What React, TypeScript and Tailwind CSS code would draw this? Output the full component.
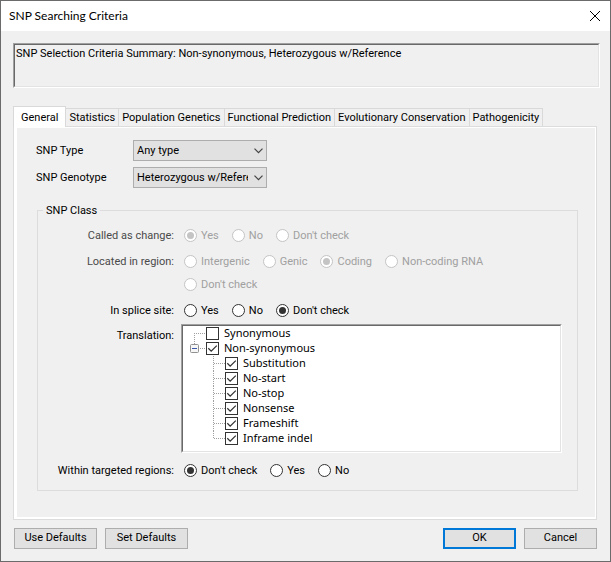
import React, { useState } from 'react';
import { clsx } from 'clsx';

const tabs = [
  'General',
  'Statistics',
  'Population Genetics',
  'Functional Prediction',
  'Evolutionary Conservation',
  'Pathogenicity',
];

const effects = ['Substitution', 'No-start', 'No-stop', 'Nonsense', 'Frameshift', 'Inframe indel'];

type RadioRowProps = {
  name: string;
  label: string;
  options: string[];
  selected: string;
  disabled?: boolean;
};

const RadioRow = ({ name, label, options, selected, disabled }: RadioRowProps) => (
  <div role="radiogroup" aria-labelledby={`${name}-label`} className="flex items-start">
    <span
      id={`${name}-label`}
      className={clsx('w-[136px] shrink-0 text-right', disabled ? 'text-[#4a4a4a]' : 'text-black')}
    >
      {label}
    </span>
    <div className="ml-2.5 flex max-w-[340px] flex-wrap gap-x-[13px] gap-y-2">
      {options.map((option) => (
        <label
          key={option}
          className={clsx('flex items-center gap-1', disabled ? 'text-[#a0a0a0]' : 'text-black')}
        >
          <input
            type="radio"
            name={name}
            defaultChecked={option === selected}
            disabled={disabled}
            className="grid size-[13px] appearance-none place-content-center rounded-full border border-[#333] bg-white before:size-[7px] before:rounded-full checked:before:bg-[#333] disabled:border-[#c4c4c4] disabled:checked:before:bg-[#c4c4c4]"
          />
          {option}
        </label>
      ))}
    </div>
  </div>
);

type SelectRowProps = {
  id: string;
  label: string;
  options: string[];
};

const SelectRow = ({ id, label, options }: SelectRowProps) => (
  <div className="flex items-center">
    <label htmlFor={id} className="w-[97px] shrink-0">
      {label}
    </label>
    <div className="grid w-[134px] items-center">
      <select
        id={id}
        className="col-start-1 row-start-1 h-[21px] w-full appearance-none border border-[#adadad] bg-[#e1e1e1] pr-[18px] pl-[3px]"
      >
        {options.map((option) => (
          <option key={option}>{option}</option>
        ))}
      </select>
      <svg
        viewBox="0 0 9 6"
        className="pointer-events-none col-start-1 row-start-1 mr-1 h-[6px] w-[9px] justify-self-end"
        fill="none"
        stroke="#444"
        strokeWidth="1.2"
      >
        <path d="M0.5 0.7 4.5 4.7 8.5 0.7" />
      </svg>
    </div>
  </div>
);

const TreeCheckbox = ({ label, defaultChecked }: { label: string; defaultChecked?: boolean }) => (
  <label className="flex items-center gap-[5px]">
    <span className="grid">
      <input
        type="checkbox"
        defaultChecked={defaultChecked}
        className="peer col-start-1 row-start-1 size-[13px] appearance-none border border-[#333] bg-white"
      />
      <svg
        viewBox="0 0 13 13"
        className="pointer-events-none invisible col-start-1 row-start-1 size-[13px] peer-checked:visible"
        fill="none"
        stroke="#333"
        strokeWidth="1.3"
      >
        <path d="M2.3 6.3 5.2 9.2 10.8 3.6" />
      </svg>
    </span>
    <span className="pb-0.5">{label}</span>
  </label>
);

const EffectTree = () => {
  const [open, setOpen] = useState(true);

  return (
    <ul
      aria-labelledby="translation-label"
      className="text-[11px] leading-[15px] text-black"
      style={{ fontFamily: '"Noto Sans", sans-serif' }}
    >
      <li className="flex h-[15px] items-center pl-[7px]">
        <svg width="16" height="15" fill="none" stroke="#a0a0a0" strokeDasharray="1 1">
          <path d="M4.5 7v8M4 7.5h12" />
        </svg>
        <TreeCheckbox label="Synonymous" />
      </li>
      <li>
        <div className="flex h-[15px] items-center pl-[7px]">
          <button type="button" aria-label="Toggle Non-synonymous" onClick={() => setOpen(!open)}>
            <svg width="16" height="15" fill="none" className="block">
              <path d="M4.5 0v3M10 7.5h6" stroke="#a0a0a0" strokeDasharray="1 1" />
              <rect x="0.5" y="3.5" width="8" height="8" rx="1" fill="#f6f6f6" stroke="#919191" />
              <path d={open ? 'M2 7.5h5' : 'M2 7.5h5M4.5 5v5'} stroke="#3a56a8" />
            </svg>
          </button>
          <TreeCheckbox label="Non-synonymous" defaultChecked />
        </div>
        {open && (
          <ul>
            {effects.map((effect, index) => (
              <li key={effect} className="flex h-[15px] items-center pl-[30px]">
                <svg width="12" height="15" fill="none" stroke="#a0a0a0" strokeDasharray="1 1">
                  <path d={index === effects.length - 1 ? 'M0.5 0v8M1 7.5h11' : 'M0.5 0v15M1 7.5h11'} />
                </svg>
                <TreeCheckbox label={effect} defaultChecked />
              </li>
            ))}
          </ul>
        )}
      </li>
    </ul>
  );
};

const DialogButton = ({ label, primary }: { label: string; primary?: boolean }) => (
  <button
    type="button"
    className={clsx(
      'h-[21px] bg-[#e1e1e1] pb-0.5 text-center',
      primary ? 'w-[73px] border-2 border-[#0078d7]' : 'border border-[#adadad]',
      label === 'Cancel' ? 'w-[73px]' : !primary && 'w-[83px]'
    )}
  >
    {label}
  </button>
);

export default function App() {
  const [active, setActive] = useState('General');

  return (
    <div
      className="flex min-h-screen flex-col border border-[#6b6b6b] bg-[#f0f0f0] text-[11px] leading-[15px] text-black"
      style={{ fontFamily: 'Roboto, "Liberation Sans", sans-serif' }}
    >
      <header
        className="flex h-[30px] items-center justify-between bg-white pr-2.5 pl-2 text-[12px]"
        style={{ fontFamily: 'Lato, "Open Sans", sans-serif' }}
      >
        <h1 className="pb-0.5">SNP Searching Criteria</h1>
        <button type="button" aria-label="Close">
          <svg width="10" height="10" fill="none" stroke="#000" className="block">
            <path d="M0 0 10 10M10 0 0 10" />
          </svg>
        </button>
      </header>

      <main className="flex flex-1 flex-col px-3 pt-3 pb-3">
        <div className="mr-[-2px] border border-t-[#a0a0a0] border-r-white border-b-white border-l-[#a0a0a0]">
          <p className="h-[43px] border border-t-[#696969] border-r-[#e3e3e3] border-b-[#e3e3e3] border-l-[#696969] pt-px pl-px">
            SNP Selection Criteria Summary: Non-synonymous, Heterozygous w/Reference
          </p>
        </div>

        <div role="tablist" className="mt-[18px] flex items-end">
          {tabs.map((tab) => (
            <button
              key={tab}
              type="button"
              role="tab"
              aria-selected={tab === active}
              onClick={() => setActive(tab)}
              className={clsx(
                'border-t border-r border-[#d9d9d9] whitespace-nowrap',
                tab === active
                  ? 'z-10 -mb-px h-[21px] border-l bg-white px-[7px]'
                  : 'h-[18px] bg-[#f0f0f0] px-[3px]'
              )}
            >
              {tab}
            </button>
          ))}
        </div>

        <section
          role="tabpanel"
          className="mr-px flex-1 border border-[#dcdcdc] bg-white pt-px pr-px pb-0.5 pl-[3px]"
        >
          <div className="h-full bg-[#f0f0f0] pt-3 pr-[17px] pb-[26px] pl-[19px]">
            <div className="flex flex-col gap-1.5">
              <SelectRow id="snp-type" label="SNP Type" options={['Any type', 'SNP', 'Insertion', 'Deletion']} />
              <SelectRow
                id="snp-genotype"
                label="SNP Genotype"
                options={['Heterozygous w/Reference', 'Heterozygous', 'Homozygous']}
              />
            </div>

            <fieldset className="mt-[15px] ml-px border border-[#dcdcdc] pr-[15px] pb-3">
              <legend className="ml-[5px] px-[3px]">SNP Class</legend>
              <div className="flex flex-col pt-2.5">
                <RadioRow
                  name="change"
                  label="Called as change:"
                  options={['Yes', 'No', "Don't check"]}
                  selected="Yes"
                  disabled
                />
                <div className="mt-[11px]">
                  <RadioRow
                    name="region"
                    label="Located in region:"
                    options={['Intergenic', 'Genic', 'Coding', 'Non-coding RNA', "Don't check"]}
                    selected="Coding"
                    disabled
                  />
                </div>
                <div className="mt-[11px]">
                  <RadioRow
                    name="splice"
                    label="In splice site:"
                    options={['Yes', 'No', "Don't check"]}
                    selected="Don't check"
                  />
                </div>
                <div className="mt-1.5 flex">
                  <span id="translation-label" className="w-[136px] shrink-0 pt-1 text-right">
                    Translation:
                  </span>
                  <div className="ml-[7px] flex-1 border border-t-[#a0a0a0] border-r-white border-b-white border-l-[#a0a0a0]">
                    <div className="h-[127px] border border-t-[#696969] border-r-[#e3e3e3] border-b-[#e3e3e3] border-l-[#696969] bg-white">
                      <EffectTree />
                    </div>
                  </div>
                </div>
                <div className="mt-2.5">
                  <RadioRow
                    name="targeted"
                    label="Within targeted regions:"
                    options={["Don't check", 'Yes', 'No']}
                    selected="Don't check"
                  />
                </div>
              </div>
            </fieldset>
          </div>
        </section>

        <footer className="mt-2 flex justify-between pr-px pl-px">
          <div className="flex gap-2">
            <DialogButton label="Use Defaults" />
            <DialogButton label="Set Defaults" />
          </div>
          <div className="flex gap-2">
            <DialogButton label="OK" primary />
            <DialogButton label="Cancel" />
          </div>
        </footer>
      </main>
    </div>
  );
}
